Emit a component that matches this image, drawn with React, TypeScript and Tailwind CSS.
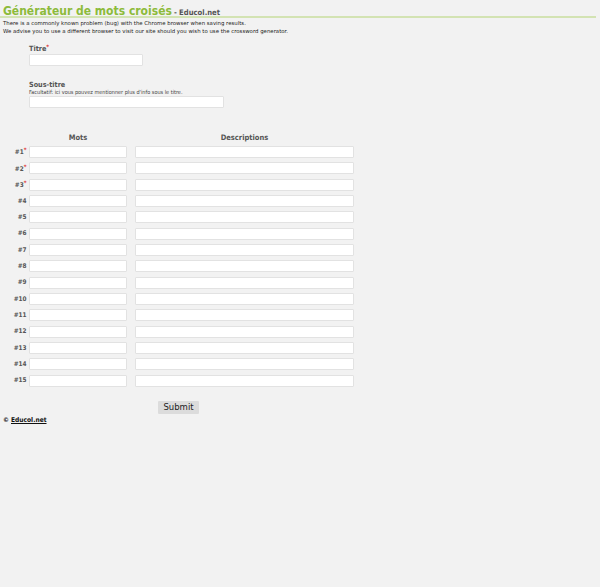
import type { ReactNode } from 'react';

const ROWS = Array.from({ length: 15 }, (_, i) => i + 1);

const inputCls = 'block h-[12px] rounded-[1px] border border-[#e2e2e2] bg-white outline-none';

function Star() {
  return <span className="relative -top-[2px] text-[6px] text-[#d33]">*</span>;
}

function Label({ children }: { children: ReactNode }) {
  return <div className="text-[7.2px] font-bold leading-[9px] text-[#555]">{children}</div>;
}

export default function App() {
  return (
    <div className="min-h-[587px] bg-[#f2f2f2] font-['DejaVu_Sans_Condensed','DejaVu_Sans',sans-serif] text-[#333]">
      <h1 className="flex h-[16px] items-baseline px-[3px] pt-[4.5px] leading-[12px]">
        <span className="text-[12px] font-bold text-[#8dbb3a]">Générateur de mots croisés</span>
        <span className="ml-[2px] text-[7.6px] font-bold text-[#555]">- Educol.net</span>
      </h1>
      <div className="h-[2px] w-[596px] bg-[#d3e3b3]" />
      <div className="px-[3px] pt-[1px] font-['DejaVu_Sans',sans-serif] text-[5.4px] leading-[8px] text-[#222]">
        <p>There is a commonly known problem (bug) with the Chrome browser when saving results.</p>
        <p>We advise you to use a different browser to visit our site should you wish to use the crossword generator.</p>
      </div>

      <div className="ml-[29px] mt-[9px]">
        <Label>
          Titre<Star />
        </Label>
        <input className={`${inputCls} mt-[0.5px] w-[114px]`} />

        <div className="mt-[14.5px]">
          <Label>Sous-titre</Label>
          <div className="text-[5.5px] leading-[6px] text-[#444]">
            Facultatif: ici vous pouvez mentionner plus d'info sous le titre.
          </div>
          <input className={`${inputCls} mt-[1.3px] w-[195px]`} />
        </div>
      </div>

      <div className="mt-[23.5px]">
        <div className="flex h-[12px] items-center text-[7.5px] font-bold text-[#555]">
          <div className="w-[29px]" />
          <div className="w-[98px] text-center">Mots</div>
          <div className="w-[8px]" />
          <div className="w-[219px] text-center">Descriptions</div>
        </div>
        <div>
          {ROWS.map((n) => (
            <div key={n} className="flex h-[16.35px] items-center">
              <div className="w-[29px] pr-[2.5px] pt-[1px] text-right text-[6.4px] font-bold text-[#555]">
                #{n}
                {n <= 3 ? <Star /> : null}
              </div>
              <input className={`${inputCls} w-[98px]`} />
              <div className="w-[8px]" />
              <input className={`${inputCls} w-[219px]`} />
            </div>
          ))}
        </div>
      </div>

      <div className="ml-[158px] mt-[12px]">
        <button className="block h-[13px] w-[41px] rounded-[1px] bg-[#dcdcdc] font-['DejaVu_Sans',sans-serif] text-[8.5px] leading-[13px] text-[#222]">
          Submit
        </button>
      </div>

      <div className="mt-[2.5px] px-[3px] text-[6.6px] font-bold leading-[9px] text-[#111]">
        © <a className="underline">Educol.net</a>
      </div>
    </div>
  );
}
